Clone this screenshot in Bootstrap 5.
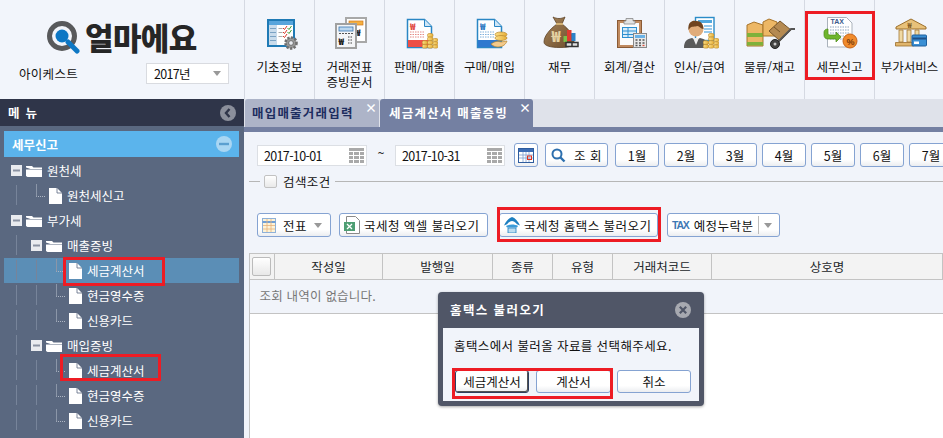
<!DOCTYPE html>
<html lang="ko">
<head>
    <meta charset="UTF-8">
    <title>세금계산서 매출증빙</title>
    <link rel="stylesheet" href="https://cdn.jsdelivr.net/npm/bootstrap@5.3.0/dist/css/bootstrap.min.css">
    <style>
        html, body { margin: 0; height: 438px; overflow: hidden; }
        body { font-family: "Noto Sans CJK KR", "Liberation Sans", sans-serif; font-size: 12.5px; color: #111; background: #f1f4fa; line-height: 15px; }
        .page-wrap { position: relative; width: 943px; height: 438px; overflow: hidden; }

        /* top bar */
        .top-bar { height: 99px; background: #f2f5fb; }
        .brand-box { width: 244px; flex: none; position: relative; }
        .brand-row { padding: 19px 0 0 47px; height: 55px; }
        .brand-name { font-size: 31px; font-weight: 900; line-height: 32px; color: #262626; margin-left: 5px; letter-spacing: -.6px; }
        .brand-sub { padding: 8px 15px 0 19px; }
        .brand-sub > span { letter-spacing: .3px; }
        .year-pick { width: 83px; height: 21px; background: #fff; border: 1px solid #d9dbe0; padding: 0 7px; }
        .year-pick span { letter-spacing: -.7px; }
        .tri-down { width: 0; height: 0; border: 4px solid transparent; border-top: 5px solid #999; border-bottom: 0; flex: none; }
        .top-item { width: 70px; flex: none; border-left: 1px solid #d5d9e2; padding-top: 16px; text-align: center; }
        .top-item svg { display: block; margin: 0 auto; overflow: visible; }
        .top-label { margin-top: 7px; }

        /* sidebar */
        .side-panel { width: 244px; flex: none; background: #5a6880; height: 339px; color: #fff; }
        .side-head { height: 27px; background: #2f3549; padding: 0 8px; font-weight: 700; }
        .side-head span { letter-spacing: 6px; }
        .side-open { margin: 5px 5px 1px 4px; height: 26px; background: #5bb4ec; padding: 0 7px 0 8px; font-weight: 700; }
        .tree-box { margin: 0 5px 0 4px; }
        .tree-line { height: 25px; position: relative; }
        .tree-line.on { background: #5b8eb6; }
        .tree-line svg { flex: none; }
        .pad-0 { padding-left: 7px; }
        .pad-1 { padding-left: 27px; }
        .pad-leaf-1 { padding-left: 45px; }
        .pad-leaf-2 { padding-left: 65px; }
        .tree-text { margin-left: 5px; }
        .guide-a { background: linear-gradient(#77849a, #77849a) 12px 2px / 1px 20px no-repeat; }
        .guide-b { background: linear-gradient(#77849a, #77849a) 12px 2px / 1px 20px no-repeat, linear-gradient(#77849a, #77849a) 32px 2px / 1px 20px no-repeat; }
        .tree-line.on.guide-b { background: linear-gradient(#77849a, #77849a) 12px 2px / 1px 20px no-repeat, linear-gradient(#77849a, #77849a) 32px 2px / 1px 20px no-repeat, #5b8eb6; }
        .elbow-1::before, .elbow-2::before { content: ""; position: absolute; top: 1px; height: 13px; width: 9px; border-left: 1px solid #8b96a8; border-bottom: 1px dotted #aeb6c3; }
        .elbow-1::before { left: 32px; }
        .elbow-2::before { left: 52px; }

        /* tabs */
        .work-area { min-width: 0; flex: 1; height: 339px; }
        .tab-strip { height: 28px; background: #dfe2ea; padding-left: 1px; gap: 1px; }
        .tab-one, .tab-two { height: 28px; font-weight: 700; letter-spacing: 1.2px; position: relative; border-radius: 3px 3px 0 0; white-space: nowrap; }
        .tab-one { width: 134px; background: #adb4c8; color: #1d2d5f; padding: 6px 0 0 7px; }
        .tab-two { width: 153px; background: #7480a2; color: #fff; padding: 6px 0 0 9px; }
        .tab-x { position: absolute; right: 2px; top: 1px; font-size: 12px; font-weight: 700; color: #fff; letter-spacing: 0; }
        .tab-rule { height: 5px; background: #7480a2; }
        .work-body { padding: 11px 0 0 13px; }

        .date-box { width: 110px; height: 21px; background: #fff; border: 1px solid #dcdfe4; padding: 0 2px 0 6px; margin-top: 2px; }
        .date-box span { letter-spacing: -.65px; }
        .tilde { width: 28px; text-align: center; margin-top: 2px; }
        .ui-btn { height: 24px; padding: 0; border: 1px solid #85a3d2; border-radius: 3px; background: linear-gradient(#fff 70%, #ebedf0); color: #111; font-size: 12.5px; line-height: 15px; white-space: nowrap; flex: none; }
        .ui-btn:hover { background: linear-gradient(#fff 70%, #ebedf0); color: #111; border-color: #85a3d2; }
        .btn-cal { width: 24px; margin-left: 9px; }
        .btn-find { width: 63px; margin-left: 7px; letter-spacing: .5px; }
        .btn-month { width: 44px; margin-right: 5px; }
        .btn-find + .btn-month { margin-left: 7px; }
        .filter-row { height: 24px; width: 800px; }

        .search-line { margin: 7px 0 0 -8px; height: 14px; }
        .search-line .rule-a { width: 11px; height: 1px; background: #b6b6b6; }
        .search-line .rule-b { flex: 1; height: 1px; background: #b6b6b6; }
        .check-box { width: 13px; height: 13px; border: 1px solid #c2c2c2; border-radius: 2px; background: linear-gradient(#fff, #e9e9e9); margin: 0 6px 0 4px; flex: none; }
        .search-text { margin-right: 4px; letter-spacing: .4px; }

        .tool-row { margin-top: 25px; height: 24px; }
        .btn-slip { width: 74px; }
        .btn-excel { width: 149px; margin-left: 8px; }
        .btn-hometax { width: 159px; margin-left: 11px; }
        .btn-omit { width: 113px; margin-left: 9px; }
        .tool-row .ui-btn { letter-spacing: .45px; }
        .tool-row .ui-btn .tax-word { font-family: "Liberation Sans", sans-serif; font-size: 10.5px; font-weight: 700; letter-spacing: -1.2px; color: #3f79b5; }
        .slip-text { margin-left: 7px; }
        .omit-text { margin-left: 5px; }
        .omit-sep { display: block; flex: none; width: 1px; height: 18px; background: #bbb; margin: 0 5px 0 5px; }

        /* grid */
        .grid-wrap { margin: 16px 0 0 -8px; width: 694px; }
        .grid-table { width: 694px; table-layout: fixed; margin: 0; border-color: #c3c3c3; --bs-table-bg: transparent; }
        .grid-table th { height: 26px; background: #f3f3f3; font-weight: 400; text-align: center; padding: 0; border-color: #c3c3c3; font-size: 12.5px; vertical-align: middle; }
        .grid-table td { height: 34px; padding: 0 0 2px 10px; color: #777; border: 0; vertical-align: middle; font-size: 12.5px; letter-spacing: .2px; }
        .head-check { width: 19px; height: 19px; border: 1px solid #bbb; border-radius: 2px; background: linear-gradient(#fff, #e8e8e8); margin-left: 2px; }
        .grid-rest { position: absolute; left: 249px; top: 314px; right: 0; bottom: 0; background: #fff; border-left: 1px solid #c3c3c3; }
        .grid-line { position: absolute; left: 249px; top: 279px; height: 35px; width: 1px; background: #c3c3c3; }

        /* dialog */
        .pop-box { position: absolute; left: 438px; top: 292px; width: 266px; height: 114px; background: #505667; border-radius: 4px; box-shadow: 0 1px 3px rgba(0,0,0,.35); padding: 0 5px 5px; }
        .pop-title { height: 35px; color: #fff; font-weight: 700; padding-left: 7px; letter-spacing: 1.4px; margin-bottom: 1px; }
        .pop-body { height: 73px; background: #f1f4fa; padding: 10px 0 0 11px; letter-spacing: .4px; }
        .pop-btns { margin-top: 17px; margin-left: 1px; }
        .pop-btn { width: 74px; height: 23px; }
        .pop-btn.focus-one { border-color: #2f3f5f; box-shadow: inset -1px -1px 0 #555; }
        .pop-btn.mid { width: 75px; margin-left: 7px; }
        .pop-btn.last { margin-left: 6px; }

        /* red annotation boxes */
        .red-mark { position: absolute; border: 3px solid #ed1c24; }
        .mark-menu { left: 805px; top: 11px; width: 70px; height: 69px; }
        .mark-side-a { left: 63px; top: 257px; width: 102px; height: 29px; }
        .mark-side-b { left: 60px; top: 354px; width: 101px; height: 27px; }
        .mark-hometax { left: 497px; top: 207px; width: 164px; height: 35px; }
        .mark-pop { left: 452px; top: 368px; width: 161px; height: 31px; }
    </style>
</head>
<body>
<div class="page-wrap">

    <svg width="0" height="0" class="d-block">
        <defs>
            <linearGradient id="sack-fill" x1="0" y1="0" x2="1" y2="1"><stop offset="0" stop-color="#a9865a"/><stop offset="1" stop-color="#6b4c2c"/></linearGradient>
            <linearGradient id="coin-fill" x1="0" y1="0" x2="1" y2="0"><stop offset="0" stop-color="#fbe08a"/><stop offset="1" stop-color="#e7ad35"/></linearGradient>
            <symbol id="ic-folder" viewBox="0 0 16 12"><path d="M0 1h6l1.500 1.500H16v1.500H4.500L0 2.500zM0 4.500h16V12H1.500L0 11z" fill="#fff"/></symbol>
            <symbol id="ic-file" viewBox="0 0 13 16"><path d="M0 0h8l5 5v11H0z" fill="#fff"/><path d="M8 0v5h5" fill="none" stroke="#5a6880" stroke-width=".8"/></symbol>
            <symbol id="ic-minus" viewBox="0 0 11 11"><rect width="11" height="11" fill="#e9ebef"/><rect x="2" y="4.500" width="7" height="2" fill="#8b93a3"/></symbol>
            <symbol id="ic-grid" viewBox="0 0 15 15"><path d="M0 0h15v3H0zM0 4h4v3H0zM5 4h5v3H5zM11 4h4v3h-4zM0 8h4v3H0zM5 8h5v3H5zM11 8h4v3h-4zM0 12h4v3H0zM5 12h5v3H5zM11 12h4v3h-4z" fill="#a9a9a9"/></symbol>
            <symbol id="ic-coins" viewBox="0 0 16 16"><g fill="url(#coin-fill)" stroke="#c2902f" stroke-width=".7"><rect x="5.500" y="0.500" width="5.500" height="3.700" rx="1.600"/><rect x="5.500" y="4" width="5.500" height="3.700" rx="1.600"/><rect x="5.500" y="7.700" width="5.500" height="3.700" rx="1.600"/><rect x="5.500" y="11.400" width="5.500" height="3.700" rx="1.600"/><rect x="11" y="5.500" width="4.800" height="3.200" rx="1.400"/><rect x="11" y="8.700" width="4.800" height="3.200" rx="1.400"/><rect x="11" y="11.900" width="4.800" height="3.200" rx="1.400"/><rect x=".2" y="7.700" width="5.300" height="3.700" rx="1.500"/><rect x=".2" y="11.400" width="5.300" height="3.700" rx="1.500"/></g></symbol>
        </defs>
    </svg>

    <!-- Top menu -->
    <div class="top-bar d-flex">
        <div class="brand-box">
            <div class="brand-row d-flex align-items-center">
                <svg width="33" height="33" viewBox="0 0 33 33">
                    <circle cx="15" cy="15" r="12.500" fill="none" stroke="#58595b" stroke-width="5"/>
                    <circle cx="15" cy="15" r="6.500" fill="#0d77c4"/>
                    <path d="M21 21l9 9" stroke="#0d77c4" stroke-width="5" stroke-linecap="round"/>
                </svg>
                <div class="brand-name">얼마에요</div>
            </div>
            <div class="brand-sub d-flex justify-content-between align-items-center">
                <span>아이케스트</span>
                <div class="year-pick d-flex justify-content-between align-items-center"><span>2017년</span><i class="tri-down"></i></div>
            </div>
        </div>

        <div class="top-item">
            <svg width="36" height="36" viewBox="0 0 36 36">
                <rect x="6" y="4" width="26" height="26" fill="#fff" stroke="#1f7ab5" stroke-width="2"/>
                <rect x="7" y="5" width="24" height="4" fill="#58a5dc"/>
                <rect x="7" y="9" width="8" height="20" fill="#c9dcec"/>
                <path d="M8 12.500h6M8 16.500h6M8 20.500h6M8 24.500h6" stroke="#7ba3c4"/>
                <path d="M16.500 12.500h4M16.500 16.500h4M16.500 20.500h4" stroke="#aaa"/>
                <path d="M21 12l1.500 1.500L25 10M21 16l1.500 1.500L25 14M21 20l1.500 1.500L25 18" fill="none" stroke="#d8362a"/>
                <path d="M25.500 12l1.500 1.500 2.500-3.500M25.500 16l1.500 1.500 2.500-3.500" fill="none" stroke="#3d9a32"/>
                <circle cx="29" cy="27" r="5.500" fill="#9a9a9a" stroke="#6f6f6f" stroke-width="2.600" stroke-dasharray="2.200 1.400"/>
                <circle cx="29" cy="27" r="2.400" fill="#e9ecf1" stroke="#6f6f6f"/>
            </svg>
            <div class="top-label">기초정보</div>
        </div>
        <div class="top-item">
            <svg width="36" height="36" viewBox="0 0 36 36">
                <rect x="14" y="2" width="20" height="24" fill="#fff" stroke="#a8a8a8" stroke-width="2"/>
                <rect x="17" y="5" width="14" height="4" fill="#f5b041" stroke="#d2791b" stroke-width=".7"/>
                <text x="23" y="20" font-size="9" font-weight="900" fill="#111">₩</text>
                <rect x="4" y="8" width="20" height="24" fill="#f4f5f7" stroke="#a0a0a0" stroke-width="2"/>
                <rect x="7" y="11" width="14" height="4" fill="#bcd7ef" stroke="#3a78b5" stroke-width=".8"/>
                <path d="M7 17.500h14" stroke="#555" stroke-dasharray="2 1"/>
                <text x="6.500" y="29" font-size="9" font-weight="900" fill="#111">₩</text>
                <path d="M16 21h5M16 24h5M16 27h5" stroke="#444" stroke-dasharray="1.500 1"/>
            </svg>
            <div class="top-label">거래전표<br>증빙문서</div>
        </div>
        <div class="top-item">
            <svg width="36" height="36" viewBox="0 0 36 36">
                <path d="M5.500 3.500h17l7 7v21h-24z" fill="#fff" stroke="#2a86c4" stroke-width="1.500"/>
                <path d="M22.500 3.500v7h7" fill="#cfe6f6" stroke="#2a86c4"/>
                <text x="8" y="14" font-size="9" font-weight="900" fill="#e04a40">₩</text>
                <path d="M8 16h14M8 18.500h14M8 21h14" stroke="#e58b85" stroke-dasharray="1.500 1"/>
                <rect x="6" y="24" width="23" height="7" fill="#ed4f47"/>
                <use href="#ic-coins" x="20" y="17" width="16" height="16"/>
            </svg>
            <div class="top-label">판매/매출</div>
        </div>
        <div class="top-item">
            <svg width="36" height="36" viewBox="0 0 36 36">
                <path d="M5.500 3.500h17l7 7v21h-24z" fill="#fff" stroke="#2a86c4" stroke-width="1.500"/>
                <path d="M22.500 3.500v7h7" fill="#cfe6f6" stroke="#2a86c4"/>
                <text x="8" y="14" font-size="9" font-weight="900" fill="#2a77bf">₩</text>
                <path d="M8 16h14M8 18.500h14M8 21h14" stroke="#7fb0dc" stroke-dasharray="1.500 1"/>
                <rect x="6" y="24" width="23" height="7" fill="#2e78cf"/>
                <ellipse cx="29" cy="18.500" rx="6" ry="2.500" fill="url(#coin-fill)" stroke="#b8862b" stroke-width=".7"/>
                <ellipse cx="29" cy="22" rx="6" ry="2.500" fill="url(#coin-fill)" stroke="#b8862b" stroke-width=".7"/>
                <path d="M19 28c4-3 7-3 10-2l6-1c-1 3-4 6-9 6-3 0-5-1-7-3z" fill="#f3c98b" stroke="#b8862b" stroke-width=".7"/>
            </svg>
            <div class="top-label">구매/매입</div>
        </div>
        <div class="top-item">
            <svg width="36" height="36" viewBox="0 0 36 36">
                <path d="M11 1c4 2 8 2 12 0l-3 7c7 5 12 12 12 18 0 4-5 5.500-14 5.500S2 30 2 26c0-6 6-13 13-18z" fill="url(#sack-fill)" stroke="#5d4327" stroke-width=".8"/>
                <path d="M14 8h7" stroke="#e2c07e" stroke-width="1.600"/>
                <text x="9.500" y="26" font-size="15" font-weight="900" fill="#e6d3a3">₩</text>
                <rect x="25" y="14" width="4.500" height="11" fill="#e03b30"/>
                <rect x="29.500" y="17" width="4" height="8" fill="#2b82c9"/>
                <rect x="21.500" y="20" width="3.500" height="6" fill="#7cc04a"/>
                <path d="M24 26.500h6v4h-6zM30 26.500h6v4h-6z" fill="#ddd" stroke="#333" stroke-width="1.500"/>
            </svg>
            <div class="top-label">재무</div>
        </div>
        <div class="top-item">
            <svg width="36" height="36" viewBox="0 0 36 36">
                <rect x="5.500" y="4.500" width="24" height="27" fill="#c08a5f" stroke="#8a5a34"/>
                <rect x="8" y="7" width="19" height="22" fill="#fbfbfb"/>
                <path d="M14 5V2.500h7V5h2v3H12V5z" fill="#e3e3e3" stroke="#888" stroke-width=".8"/>
                <rect x="10.500" y="11.500" width="14" height="10" fill="#d9ecf9" stroke="#2d8fd0"/>
                <path d="M10.500 15h14M10.500 18.500h14M16 11.500v10" stroke="#2d8fd0"/>
                <rect x="21.500" y="17.500" width="13" height="14" fill="#e8e8e8" stroke="#888"/>
                <rect x="23" y="19" width="10" height="3" fill="#6ab2e6"/>
                <path d="M23.500 24h2M27 24h2M30.500 24h2M23.500 27h2M27 27h2M30.500 27h2M23.500 29.500h2M27 29.500h2" stroke="#555" stroke-width="1.300"/>
                <path d="M30.500 29.500h2" stroke="#e0503f" stroke-width="1.300"/>
            </svg>
            <div class="top-label">회계/결산</div>
        </div>
        <div class="top-item">
            <svg width="36" height="36" viewBox="0 0 36 36">
                <rect x="13.500" y="1.500" width="18.500" height="23" fill="#fff" stroke="#2b8cc8" stroke-width="1.400"/>
                <rect x="16" y="4" width="14" height="3" fill="#52a8de"/>
                <path d="M22 10h8M22 13h8M22 16h8" stroke="#77b8e3" stroke-width="1.300"/>
                <path d="M2 32c0-7 3-9 8-10l4 2 4-2c5 1 8 3 8 10z" fill="#5a5a5a"/>
                <path d="M11 22l3 7 3-7z" fill="#eee"/>
                <circle cx="14" cy="13" r="7.500" fill="#e0ac7a"/>
                <path d="M6.500 14c-1-8 4-10 8-9 4.500 0 7 3 7 8-3 0-4-3-6-3-3 1-6 0-7.500 2z" fill="#6f4420"/>
                <use href="#ic-coins" x="21" y="17" width="16" height="16"/>
            </svg>
            <div class="top-label">인사/급여</div>
        </div>
        <div class="top-item">
            <svg width="36" height="36" viewBox="0 0 36 36">
                <path d="M-5 9l7-3 9 3v21H-5z" fill="#edb765" stroke="#a8742a"/>
                <rect x="-5" y="17" width="16" height="4" fill="#7fb13a"/>
                <rect x="-5" y="26" width="16" height="3.500" fill="#7fb13a"/>
                <path d="M11 6l6-3 8 3v14H11z" fill="#edb765" stroke="#a8742a"/>
                <path d="M17 15l11-10 11 9-11 11z" fill="#b58a52" stroke="#76552a"/>
                <path d="M22 11l6 5" stroke="#76552a"/>
                <path d="M23 29l16-16h4" fill="none" stroke="#555" stroke-width="2"/>
                <circle cx="23" cy="28" r="4.500" fill="#444" stroke="#222"/>
                <circle cx="23" cy="28" r="1.500" fill="#ccc"/>
            </svg>
            <div class="top-label">물류/재고</div>
        </div>
        <div class="top-item">
            <svg width="36" height="36" viewBox="0 0 36 36">
                <path d="M5.500 1.500h19l5.500 5.500v24H5.500z" fill="#fff" stroke="#aab2bb"/>
                <text x="8.500" y="8" font-size="7" font-weight="900" font-family="Liberation Sans, sans-serif" fill="#3b5b8c">TAX</text>
                <path d="M8 11h19M8 14h19M8 17h19M8 20h15M8 23h15" stroke="#8fa5bf" stroke-dasharray="1.500 1"/>
                <path d="M14 23H6c-3 0-4-2-4-4v-3c0-2 2-3 4-3v3c0 2 0 3 2 3h6v-3l5 5-5 5z" fill="#6fb52d" stroke="#4b8b17" stroke-width=".7"/>
                <circle cx="28" cy="25" r="7" fill="#f08b2c" stroke="#c8651a"/>
                <text x="24.500" y="28.500" font-size="9" font-weight="700" font-family="Liberation Sans, sans-serif" fill="#7a3c0c">%</text>
            </svg>
            <div class="top-label">세무신고</div>
        </div>
        <div class="top-item">
            <svg width="36" height="36" viewBox="0 0 36 36">
                <path d="M4 11L19 3l15 8v2H4z" fill="#e8c17a" stroke="#9c6f2c"/>
                <text x="15.500" y="11.500" font-size="7" font-weight="700" fill="#7d561c">₩</text>
                <path d="M7 14h4v12H7zM15 14h4v12h-4zM23 14h4v6h-4z" fill="#f0d9a4" stroke="#a47a35" stroke-width=".8"/>
                <path d="M3.500 26.500h18v3.500h-18z" fill="#e0b56c" stroke="#9c6f2c" stroke-width=".8"/>
                <rect x="20" y="19" width="14.500" height="11" rx="1" fill="#3a8fd4" stroke="#1e5f9c"/>
                <rect x="20.500" y="21.500" width="13.500" height="2" fill="#1e4f86"/>
                <rect x="22" y="25.500" width="5" height="2.500" fill="#fff"/>
            </svg>
            <div class="top-label">부가서비스</div>
        </div>
    </div>

    <div class="d-flex">
        <!-- Sidebar -->
        <div class="side-panel">
            <div class="side-head d-flex justify-content-between align-items-center">
                <span>메뉴</span>
                <svg width="16" height="16" viewBox="0 0 16 16"><circle cx="8" cy="8" r="8" fill="#8b8f9b"/><path d="M9.500 4L6 8l3.500 4" fill="none" stroke="#2f3549" stroke-width="2.400"/></svg>
            </div>
            <div class="side-open d-flex justify-content-between align-items-center">
                <span>세무신고</span>
                <svg width="16" height="16" viewBox="0 0 16 16"><circle cx="8" cy="8" r="8" fill="#a9d6f3"/><rect x="3" y="6.800" width="10" height="2.400" fill="#5b9fd0"/></svg>
            </div>
            <div class="tree-box">
                <div class="tree-line pad-0 d-flex align-items-center"><svg width="11" height="11"><use href="#ic-minus"/></svg><svg width="16" height="12" class="ms-1"><use href="#ic-folder"/></svg><span class="tree-text">원천세</span></div>
                <div class="tree-line pad-leaf-1 elbow-1 guide-a d-flex align-items-center"><svg width="13" height="16"><use href="#ic-file"/></svg><span class="tree-text">원천세신고</span></div>
                <div class="tree-line pad-0 d-flex align-items-center"><svg width="11" height="11"><use href="#ic-minus"/></svg><svg width="16" height="12" class="ms-1"><use href="#ic-folder"/></svg><span class="tree-text">부가세</span></div>
                <div class="tree-line pad-1 guide-a d-flex align-items-center"><svg width="11" height="11"><use href="#ic-minus"/></svg><svg width="16" height="12" class="ms-1"><use href="#ic-folder"/></svg><span class="tree-text">매출증빙</span></div>
                <div class="tree-line on pad-leaf-2 elbow-2 guide-b d-flex align-items-center"><svg width="13" height="16"><use href="#ic-file"/></svg><span class="tree-text">세금계산서</span></div>
                <div class="tree-line pad-leaf-2 elbow-2 guide-b d-flex align-items-center"><svg width="13" height="16"><use href="#ic-file"/></svg><span class="tree-text">현금영수증</span></div>
                <div class="tree-line pad-leaf-2 elbow-2 guide-b d-flex align-items-center"><svg width="13" height="16"><use href="#ic-file"/></svg><span class="tree-text">신용카드</span></div>
                <div class="tree-line pad-1 guide-a d-flex align-items-center"><svg width="11" height="11"><use href="#ic-minus"/></svg><svg width="16" height="12" class="ms-1"><use href="#ic-folder"/></svg><span class="tree-text">매입증빙</span></div>
                <div class="tree-line pad-leaf-2 elbow-2 guide-b d-flex align-items-center"><svg width="13" height="16"><use href="#ic-file"/></svg><span class="tree-text">세금계산서</span></div>
                <div class="tree-line pad-leaf-2 elbow-2 guide-b d-flex align-items-center"><svg width="13" height="16"><use href="#ic-file"/></svg><span class="tree-text">현금영수증</span></div>
                <div class="tree-line pad-leaf-2 elbow-2 guide-b d-flex align-items-center"><svg width="13" height="16"><use href="#ic-file"/></svg><span class="tree-text">신용카드</span></div>
            </div>
        </div>

        <!-- Work area -->
        <div class="work-area">
            <div class="tab-strip d-flex">
                <div class="tab-one">매입매출거래입력<span class="tab-x">×</span></div>
                <div class="tab-two">세금계산서 매출증빙<span class="tab-x">×</span></div>
            </div>
            <div class="tab-rule"></div>
            <div class="work-body">
                <div class="filter-row d-flex align-items-start">
                    <div class="date-box d-flex justify-content-between align-items-center"><span>2017-10-01</span><svg width="15" height="15"><use href="#ic-grid"/></svg></div>
                    <span class="tilde">~</span>
                    <div class="date-box d-flex justify-content-between align-items-center"><span>2017-10-31</span><svg width="15" height="15"><use href="#ic-grid"/></svg></div>
                    <button class="btn ui-btn btn-cal d-flex align-items-center justify-content-center">
                        <svg width="16" height="16" viewBox="0 0 16 16"><rect x=".5" y="1.500" width="15" height="14" fill="#fff" stroke="#2e5c9e"/><rect x="1" y="2" width="14" height="3" fill="#3d6db5"/><path d="M1 8h14M1 11h14M5 5v10M8 5v10M11 5v10" stroke="#7f9fcf" stroke-width=".8"/><rect x="9.500" y="9" width="4" height="3.500" fill="none" stroke="#e0301e"/></svg>
                    </button>
                    <button class="btn ui-btn btn-find d-flex align-items-center justify-content-center gap-2">
                        <svg width="15" height="15" viewBox="0 0 15 15"><circle cx="6" cy="6" r="4.500" fill="none" stroke="#2d6fae" stroke-width="2"/><path d="M9.500 9.500l4 4" stroke="#2d6fae" stroke-width="2.400"/></svg><span>조 회</span>
                    </button>
                    <button class="btn ui-btn btn-month">1월</button>
                    <button class="btn ui-btn btn-month">2월</button>
                    <button class="btn ui-btn btn-month">3월</button>
                    <button class="btn ui-btn btn-month">4월</button>
                    <button class="btn ui-btn btn-month">5월</button>
                    <button class="btn ui-btn btn-month">6월</button>
                    <button class="btn ui-btn btn-month">7월</button>
                </div>

                <div class="search-line d-flex align-items-center">
                    <i class="rule-a"></i><i class="check-box"></i><span class="search-text">검색조건</span><i class="rule-b"></i>
                </div>

                <div class="tool-row d-flex">
                    <button class="btn ui-btn btn-slip d-flex align-items-center px-1">
                        <svg width="14" height="15" viewBox="0 0 14 15"><rect x=".5" y=".5" width="13" height="14" fill="#fdf3d8" stroke="#8fb1d8"/><path d="M.5 4h13" stroke="#6f9fd6" stroke-width="2"/><path d="M5 1v13M9 1v13M1 7.500h12M1 11h12" stroke="#e9b27a" stroke-width=".8"/></svg>
                        <span class="slip-text">전표</span><i class="tri-down ms-auto me-1"></i>
                    </button>
                    <button class="btn ui-btn btn-excel d-flex align-items-center px-1">
                        <svg width="16" height="18" viewBox="0 0 16 18"><path d="M2.500.5h9l4 4v13h-13z" fill="#fff" stroke="#8a8a8a"/><rect x="0" y="6" width="11" height="9" fill="#4e9e73"/><path d="M3 8l5 5M8 8l-5 5" stroke="#fff" stroke-width="1.300"/></svg>
                        <span class="ms-1">국세청 엑셀 불러오기</span>
                    </button>
                    <button class="btn ui-btn btn-hometax d-flex align-items-center px-1">
                        <svg width="16" height="16" viewBox="0 0 16 16"><path d="M0 8.500C2 4 5 1 8 0c3 1 6 4 8 8.500l-3-1.200C11 5 9.500 4 8 4S5 5 3 7.300z" fill="#1d7fc0"/><path d="M2 9c3-2 9-2 12 0l-1 1.500H3z" fill="#3a9bd8"/><rect x="4" y="11" width="8" height="5" fill="#bcdcf0" stroke="#1d7fc0" stroke-width=".8"/></svg>
                        <span class="ms-1">국세청 홈택스 불러오기</span>
                    </button>
                    <button class="btn ui-btn btn-omit d-flex align-items-center px-1">
                        <span class="tax-word">TAX</span>
                        <span class="omit-text">예정누락분</span><i class="omit-sep"></i><i class="tri-down"></i>
                    </button>
                </div>

                <div class="grid-wrap">
                    <table class="table table-bordered grid-table">
                        <colgroup><col style="width:25px"><col style="width:108px"><col style="width:110px"><col style="width:60px"><col style="width:60px"><col style="width:99px"><col></colgroup>
                        <thead>
                            <tr>
                                <th><div class="head-check"></div></th>
                                <th>작성일</th>
                                <th>발행일</th>
                                <th>종류</th>
                                <th>유형</th>
                                <th>거래처코드</th>
                                <th>상호명</th>
                            </tr>
                        </thead>
                        <tbody>
                            <tr><td colspan="7">조회 내역이 없습니다.</td></tr>
                        </tbody>
                    </table>
                </div>
            </div>
        </div>
    </div>

    <div class="grid-line"></div>
    <div class="grid-rest"></div>

    <!-- Dialog -->
    <div class="pop-box">
        <div class="pop-title d-flex justify-content-between align-items-center">
            <span>홈택스 불러오기</span>
            <svg width="16" height="16" viewBox="0 0 16 16" class="me-2"><circle cx="8" cy="8" r="8" fill="#a7a9b0"/><path d="M4.800 4.800l6.400 6.400M11.200 4.800l-6.400 6.400" stroke="#505667" stroke-width="2.200"/></svg>
        </div>
        <div class="pop-body">
            <div>홈택스에서 불러올 자료를 선택해주세요.</div>
            <div class="pop-btns d-flex">
                <button class="btn ui-btn pop-btn focus-one">세금계산서</button>
                <button class="btn ui-btn pop-btn mid">계산서</button>
                <button class="btn ui-btn pop-btn last">취소</button>
            </div>
        </div>
    </div>

    <!-- Red annotation boxes -->
    <div class="red-mark mark-menu"></div>
    <div class="red-mark mark-side-a"></div>
    <div class="red-mark mark-side-b"></div>
    <div class="red-mark mark-hometax"></div>
    <div class="red-mark mark-pop"></div>
</div>
<script src="https://cdn.jsdelivr.net/npm/bootstrap@5.3.0/dist/js/bootstrap.bundle.min.js"></script>
</body>
</html>
